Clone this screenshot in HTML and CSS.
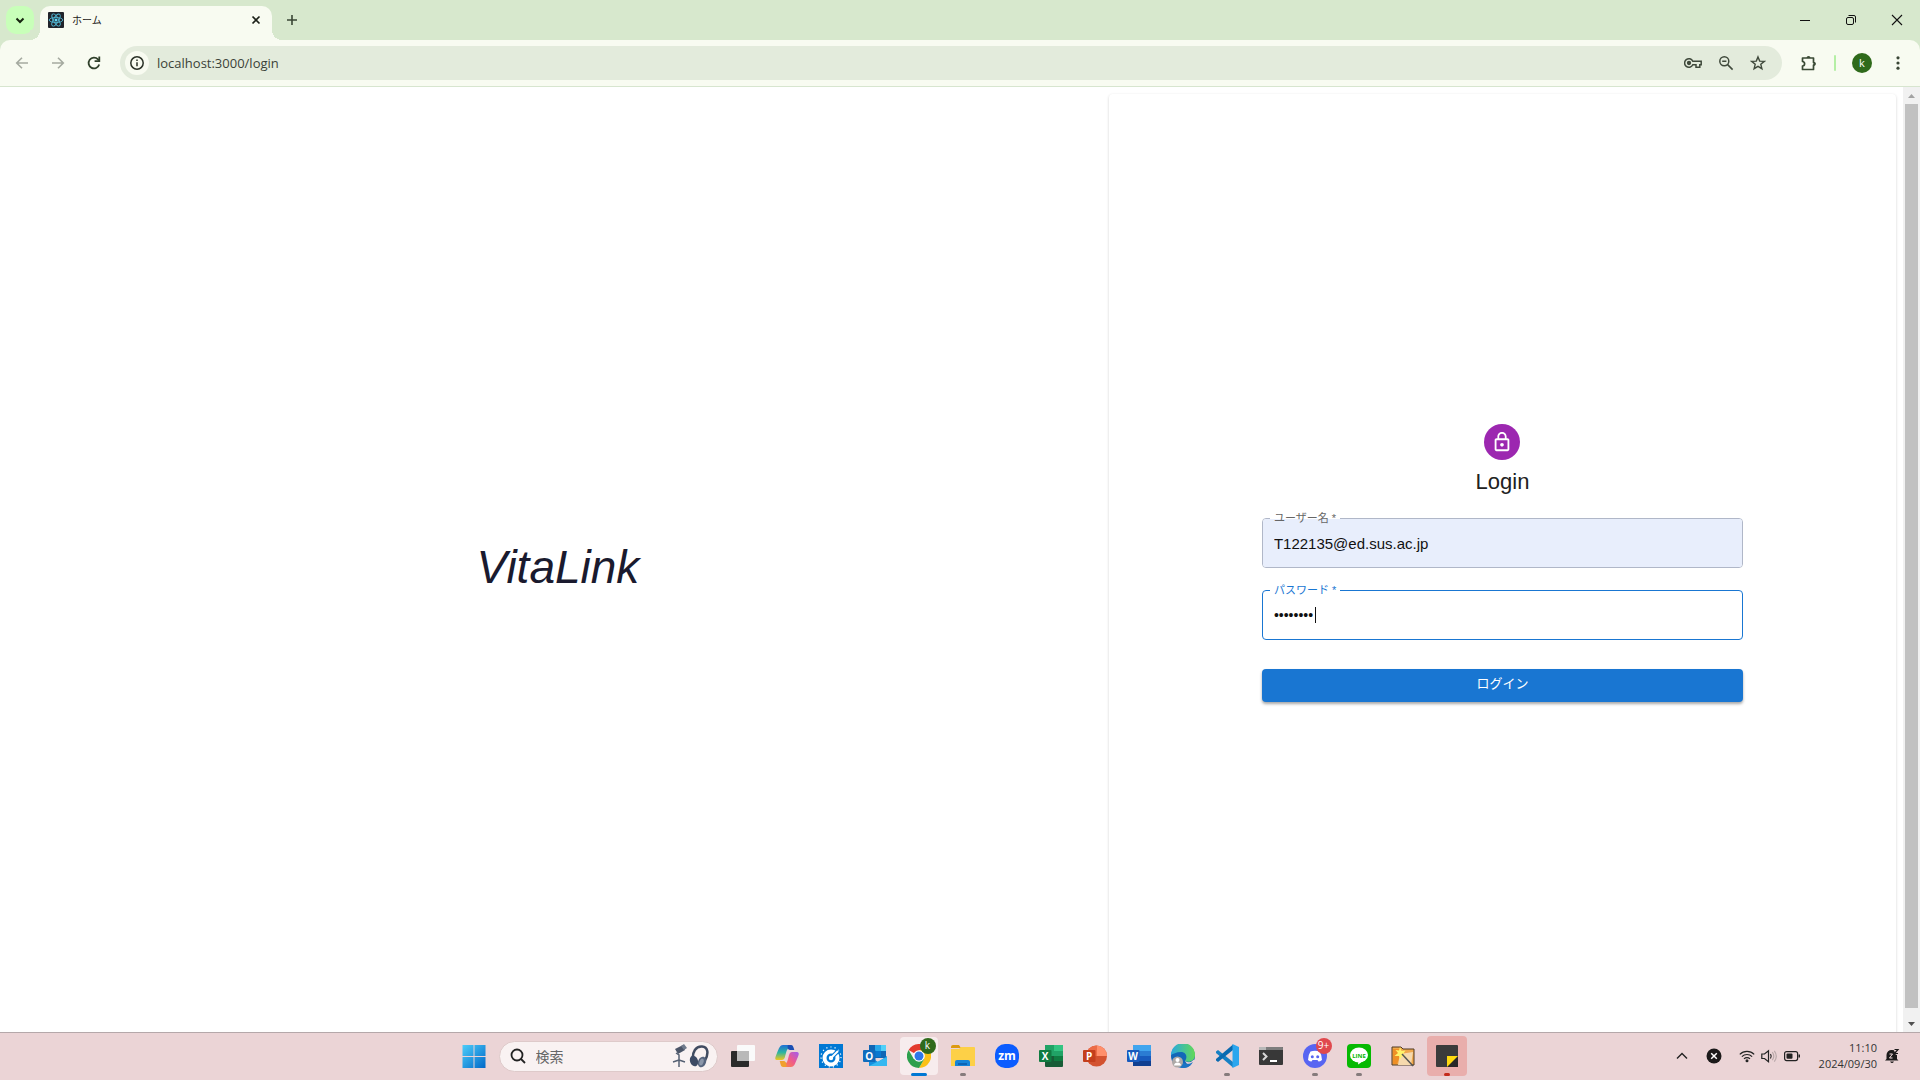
FILE: index.html
```html
<!DOCTYPE html>
<html lang="ja">
<head>
<meta charset="utf-8">
<meta name="viewport" content="width=device-width, initial-scale=1">
<title>ホーム</title>
<link rel="stylesheet" href="styles.css">
</head>
<body>
<div class="desktop">
  <header class="tab-strip">
    <button class="tab-search" type="button" aria-label="タブを検索"><svg width="12" height="12" viewBox="0 0 12 12"><path d="M2.5 4.5 6 8l3.5-3.5" fill="none" stroke="#16240f" stroke-width="2"/></svg></button>
    <div class="tab">
      <svg width="16" height="16" viewBox="0 0 16 16"><rect width="16" height="16" rx="1" fill="#20232a"/><g fill="none" stroke="#4fb4d0" stroke-width=".9"><ellipse cx="8" cy="8" rx="6.8" ry="2.6"/><ellipse cx="8" cy="8" rx="6.8" ry="2.6" transform="rotate(60 8 8)"/><ellipse cx="8" cy="8" rx="6.8" ry="2.6" transform="rotate(120 8 8)"/></g><circle cx="8" cy="8" r="1.5" fill="#61dafb"/></svg>
      <span class="tab-title">ホーム</span>
      <button class="plain" type="button" aria-label="閉じる"><svg width="16" height="16" viewBox="0 0 16 16"><path d="m4.5 4.5 7 7m0-7-7 7" stroke="#1c2119" stroke-width="1.7"/></svg></button>
    </div>
    <button class="plain new-tab" type="button" aria-label="新しいタブ"><svg width="16" height="16" viewBox="0 0 16 16"><path d="M8 3v10M3 8h10" stroke="#3a4635" stroke-width="1.6"/></svg></button>
    <div class="window-controls">
      <button class="plain" type="button" aria-label="最小化"><svg width="12" height="12" viewBox="0 0 12 12"><path d="M1 6.500h10" stroke="#111" stroke-width="1"/></svg></button>
      <button class="plain" type="button" aria-label="元に戻す"><svg width="12" height="12" viewBox="0 0 12 12" fill="none" stroke="#111"><rect x="1.500" y="3.500" width="7" height="7" rx="1.500"/><path d="M3.500 1.500H9a1.500 1.500 0 0 1 1.500 1.500v5.500"/></svg></button>
      <button class="plain" type="button" aria-label="ウィンドウを閉じる"><svg width="12" height="12" viewBox="0 0 12 12"><path d="m1 1 10 10M11 1 1 11" stroke="#111" stroke-width="1.100"/></svg></button>
    </div>
  </header>

  <nav class="toolbar">
    <div class="nav-buttons">
      <button class="plain" type="button" aria-label="戻る"><svg width="16" height="16" viewBox="0 0 16 16" fill="none" stroke="#a5aaa0" stroke-width="1.600"><path d="M14 8H3m5-5.300L2.700 8 8 13.300"/></svg></button>
      <button class="plain" type="button" aria-label="進む"><svg width="16" height="16" viewBox="0 0 16 16" fill="none" stroke="#a5aaa0" stroke-width="1.600"><path d="M2 8h11M8 2.700 13.300 8 8 13.300"/></svg></button>
      <button class="plain" type="button" aria-label="再読み込み"><svg width="16" height="16" viewBox="0 0 16 16" fill="none" stroke="#30402b" stroke-width="1.800"><path d="M13.200 9.500A5.400 5.400 0 1 1 12 4.400l1 1"/><path d="M13.300 1.500v4.700H8.600"/></svg></button>
    </div>
    <div class="omnibox">
      <button class="site-info" type="button" aria-label="サイト情報"><svg width="16" height="16" viewBox="0 0 16 16" fill="none" stroke="#2a3127" stroke-width="1.500"><circle cx="8" cy="8" r="6.200"/><path d="M8 7.200v4M8 4.500v1.600"/></svg></button>
      <input class="url" type="text" value="localhost:3000/login" aria-label="アドレスバー">
      <button class="plain" type="button" aria-label="パスワード管理"><svg width="18" height="16" viewBox="1 0 18 16" fill="none" stroke="#3f493b" stroke-width="1.500"><path d="M9.800 6.200a4.300 4.300 0 1 0 0 3.600H13v2.500h3.800V9.800h1.400V6.200z"/><circle cx="6" cy="8" r="1.400" fill="#3f493b"/></svg></button>
      <button class="plain" type="button" aria-label="ズーム"><svg width="16" height="16" viewBox="0 0 16 16" fill="none" stroke="#3f493b" stroke-width="1.500"><circle cx="6.300" cy="6.300" r="4.500"/><path d="m9.600 9.600 5 5M4.200 6.300h4.200"/></svg></button>
      <button class="plain" type="button" aria-label="ブックマーク"><svg width="16" height="16" viewBox="0 0 16 16" fill="none" stroke="#3f493b" stroke-width="1.400"><path d="m8 1.900 1.700 4.200 4.600.3-3.500 2.900 1.100 4.400L8 11.300l-3.900 2.400 1.100-4.400-3.500-2.900 4.600-.3z"/></svg></button>
    </div>
    <div class="toolbar-end">
      <button class="plain" type="button" aria-label="拡張機能"><svg width="18" height="18" viewBox="0 0 18 18"><path d="M2.500 4h11v4.500c2 0 2 2.500 0 2.500v4.500h-11V12c2.800-.3 2.800-4.200 0-4.500z" fill="none" stroke="#3a4a35" stroke-width="1.700" stroke-linejoin="round"/><path d="M6.500 4a2 2 0 0 1 4 0zm7 4a2 2 0 0 1 0 4z" fill="#3a4a35"/></svg></button>
      <span class="divider"></span>
      <button class="profile" type="button">k</button>
      <button class="plain" type="button" aria-label="メニュー"><svg width="16" height="16" viewBox="0 0 16 16" fill="#3a4635"><circle cx="8" cy="2.800" r="1.600"/><circle cx="8" cy="8" r="1.600"/><circle cx="8" cy="13.200" r="1.600"/></svg></button>
    </div>
  </nav>

  <div class="viewport">
    <main class="page">
      <section class="brand"><h1>VitaLink</h1></section>
      <section class="paper">
        <div class="lock"><svg width="22" height="22" viewBox="0 0 24 24" fill="#fff"><path d="M12 17c1.100 0 2-.9 2-2s-.9-2-2-2-2 .9-2 2 .9 2 2 2m6-9h-1V6c0-2.760-2.240-5-5-5S7 3.240 7 6v2H6c-1.100 0-2 .9-2 2v10c0 1.100.9 2 2 2h12c1.100 0 2-.9 2-2V10c0-1.100-.9-2-2-2M8.900 6c0-1.710 1.390-3.100 3.100-3.100s3.100 1.390 3.100 3.100v2H8.900zM18 20H6V10h12z"/></svg></div>
        <h2>Login</h2>
        <form class="login-form">
          <fieldset class="field filled">
            <legend><label for="user">ユーザー名 *</label></legend>
            <div class="input-wrap"><input id="user" type="text" value="T122135@ed.sus.ac.jp"></div>
          </fieldset>
          <fieldset class="field active">
            <legend><label for="password">パスワード *</label></legend>
            <div class="input-wrap"><input id="password" type="password" value="password"><span class="caret"></span></div>
          </fieldset>
          <button class="submit" type="submit">ログイン</button>
        </form>
      </section>
    </main>
    <div class="scrollbar">
      <svg width="17" height="17" viewBox="0 0 17 17"><path d="M5 11h7L8.500 7z" fill="#a3a3a3"/></svg>
      <span class="thumb"></span>
      <svg width="17" height="17" viewBox="0 0 17 17"><path d="M5 7h7l-3.500 4z" fill="#505050"/></svg>
    </div>
  </div>

  <footer class="taskbar">
    <div class="apps">
      <button class="app start" type="button" aria-label="スタート"><svg width="24" height="24" viewBox="0 0 24 24"><defs><linearGradient id="win" x2="1" y2="1" gradientUnits="userSpaceOnUse" x1="0" y1="0" gradientTransform="scale(24)"><stop stop-color="#4fd0fb"/><stop offset="1" stop-color="#0067c8"/></linearGradient></defs><path d="M.5 1h11v11H.500zM12.500 1h11v11h-11zM.500 13h11v11H.500zM12.500 13h11v11h-11z" fill="url(#win)"/></svg></button>
      <div class="search">
        <svg width="16" height="16" viewBox="0 0 16 16" fill="none" stroke="#222" stroke-width="1.800"><circle cx="7" cy="7" r="5.500"/><path d="m11 11 4 4"/></svg>
        <input type="text" placeholder="検索" aria-label="検索">
        <svg width="38" height="24" viewBox="0 0 38 24"><path d="m4 5 8-4 2 5-7 4z" fill="#4b5568"/><path d="m10 2 3-2 3 4-3 2z" fill="#707b8c"/><path d="m5 9 3 2v5m0 0-6 2m6-2 6 2m-6-3v8" fill="none" stroke="#566174" stroke-width="1.500"/><path d="M22 16C21 8 25 2 31 2.500c6 .5 7 7 3 14" fill="none" stroke="#414c61" stroke-width="2.500"/><ellipse cx="23" cy="17" rx="4" ry="5.500" fill="#3d4a64" transform="rotate(-20 23 17)"/><ellipse cx="31" cy="18" rx="4" ry="5.500" fill="#56647d" transform="rotate(20 31 18)"/><ellipse cx="30.500" cy="18" rx="2" ry="3.500" fill="#8b97aa" transform="rotate(20 30.500 18)"/></svg>
      </div>
      <button class="app" type="button" aria-label="タスクビュー"><svg width="24" height="24" viewBox="0 0 24 24"><rect y="7" width="18" height="16" rx="1" fill="#2a2a2a"/><rect x="6" y="1" width="18" height="16" rx="1" fill="#fafafa"/><path d="M6 7h12v10H6z" fill="#b9b9b9"/></svg></button>
      <button class="app" type="button" aria-label="Copilot"><svg width="24" height="24" viewBox="0 0 24 24"><defs><linearGradient id="cpa" x1="0" y1="0" x2="0" y2="1"><stop stop-color="#1f6fd6"/><stop offset=".5" stop-color="#2db5a0"/><stop offset="1" stop-color="#f2c71b"/></linearGradient><linearGradient id="cpb" x1="1" y1="0" x2="0" y2="1"><stop stop-color="#a15bf0"/><stop offset=".5" stop-color="#ef5a8c"/><stop offset="1" stop-color="#fb8d3c"/></linearGradient></defs><path d="M14 1H8C5 1 4 4 2 9c-2 5-3 7 1 7h4c3 0 3-4 4-7 1-4 2-5 5-5-.4-1.600-.800-3-2-3z" fill="url(#cpa)"/><path d="M13 1h3c2 0 2.500 2 3.300 5H15c-2 0-3-3-2-5z" fill="#1b4fb4"/><path d="M10 23h6c3 0 4-3 6-8s3-7-1-7h-4c-3 0-3 4-4 7-1 4-2 5-5 5 .4 1.600.8 3 2 3z" fill="url(#cpb)"/><path d="M11 23H8c-2 0-2.500-3-3.300-6H9c2 0 3 4 2 6z" fill="#f0a02c"/></svg></button>
      <button class="app" type="button" aria-label="設定ツール"><svg width="24" height="24" viewBox="0 0 24 24"><rect width="24" height="24" fill="#0078d4"/><circle cx="12" cy="13" r="10" fill="none" stroke="#fff" stroke-width="1.200" stroke-dasharray="1.200 3"/><circle cx="12" cy="14" r="6.500" fill="#0078d4" stroke="#fff" stroke-width="4"/><path d="m11.500 14.500 8-8" stroke="#0078d4" stroke-width="4"/><path d="m11.500 14.500 7.500-7.500" stroke="#fff" stroke-width="2"/><circle cx="12" cy="14" r="2.200" fill="#fff"/></svg></button>
      <button class="app" type="button" aria-label="Outlook"><svg width="24" height="24" viewBox="0 0 24 24"><path d="M6 1h17v13H6z" fill="#1066b5"/><path d="M12 1h6v6h-6z" fill="#28a8ea"/><path d="M18 1h5v6h-5z" fill="#50d0f8"/><path d="M12 7h6v6h-6z" fill="#0a78d0"/><path d="M6 12 15 18l9-6v10H6z" fill="#1490df"/><path d="m6 22 18-9v9z" fill="#35b8f1"/><rect y="6" width="12.500" height="12" rx="1" fill="#0f6cbd"/><text x="6.200" y="15.500" class="tile">O</text></svg></button>
      <button class="app current" type="button" aria-label="Chrome"><svg width="24" height="24" viewBox="0 0 24 24"><path d="M12 12 1.600 6A12 12 0 0 1 22.400 6z" fill="#e33b2e"/><path d="M12 12V6h10.400A12 12 0 0 1 12 24l5.200-9z" fill="#fbc116"/><path d="M12 12 17.200 15 12 24A12 12 0 0 1 1.600 6l5.200 9z" fill="#2da04d"/><circle cx="12" cy="12" r="5.800" fill="#fff"/><circle cx="12" cy="12" r="4.500" fill="#2f78e8"/></svg><span class="badge green">k</span><i class="run wide"></i></button>
      <button class="app" type="button" aria-label="エクスプローラー"><svg width="24" height="24" viewBox="0 0 24 24"><path d="M0 3q0-2 2-2h6l2 3H0z" fill="#dc9a10"/><path d="M0 5h8l2-2h13q1 0 1 1v18H0z" fill="#fdd047"/><path d="M4 22v-4q0-2 2-2h11q2 0 2 2v4z" fill="#1684d8"/><path d="M7 20h9" stroke="#0b5aa8" stroke-width="1.500"/></svg><i class="run"></i></button>
      <button class="app" type="button" aria-label="Zoom"><svg width="24" height="24" viewBox="0 0 24 24"><rect width="24" height="24" rx="10" fill="#0b5cff"/><text x="12" y="16" class="tile zoom">zm</text></svg></button>
      <button class="app" type="button" aria-label="Excel"><svg width="24" height="24" viewBox="0 0 24 24"><rect x="6" y="1" width="18" height="22" rx="1" fill="#185c37"/><path d="M6 1h9v11H6z" fill="#21a366"/><path d="M15 1h9v6h-9z" fill="#33c481"/><path d="M15 7h9v5h-9z" fill="#21a366"/><path d="M6 12h9v5H6z" fill="#185c37"/><path d="M15 12h9v5h-9z" fill="#107c41"/><rect y="6" width="12.500" height="12" rx="1" fill="#107c41"/><text x="6.200" y="15.500" class="tile">X</text></svg></button>
      <button class="app" type="button" aria-label="PowerPoint"><svg width="24" height="24" viewBox="0 0 24 24"><circle cx="13.500" cy="12" r="10.500" fill="#d35230"/><path d="M13.500 1.500A10.500 10.500 0 0 1 24 12H13.500z" fill="#ff8f6b"/><path d="M13.500 1.500A10.500 10.500 0 0 0 3 12h10.500z" fill="#ed6c47"/><rect y="6" width="12.500" height="12" rx="1" fill="#c43e1c"/><text x="6.200" y="15.500" class="tile">P</text></svg></button>
      <button class="app" type="button" aria-label="Word"><svg width="24" height="24" viewBox="0 0 24 24"><path d="M6 1h18v6H6z" fill="#41a5ee"/><path d="M6 7h18v5H6z" fill="#2b7cd3"/><path d="M6 12h18v5H6z" fill="#185abd"/><path d="M6 17h18v5H6z" fill="#103f91"/><rect y="6" width="12.500" height="12" rx="1" fill="#185abd"/><text x="6.200" y="15.500" class="tile">W</text></svg></button>
      <button class="app" type="button" aria-label="Edge"><svg width="24" height="24" viewBox="0 0 24 24"><defs><linearGradient id="edge" x1="0" y1="0" x2="1" y2="0"><stop stop-color="#2aa8e0"/><stop offset="1" stop-color="#62d957"/></linearGradient></defs><circle cx="12" cy="12" r="12" fill="#1267b8"/><path d="M0 11A12 12 0 0 1 24 11c0 6-6 8-10 6 3-4 1-9-4-9-5 0-8 2-10 3z" fill="url(#edge)"/><path d="M14 17q5 3 9-1.500l2 1.500-3 4-6-1z" fill="#ebd4d6"/><path d="M9 13c0 6 7 9 13 5-3 5-8 6-11 6-4-2-4-8-2-11z" fill="#1b74c4"/><circle cx="6.500" cy="18" r="5.500" fill="#ada9a7"/><circle cx="6.500" cy="16" r="2" fill="#fff"/><path d="M3 21.500c0-4 7-4 7 0z" fill="#fff"/></svg></button>
      <button class="app" type="button" aria-label="VS Code"><svg width="24" height="24" viewBox="0 0 24 24"><path d="m1 7.500 2-1.500 15 12v5.500L1 9z" fill="#1680c4"/><path d="M1 16.500 3 18 18 6V.5L1 15z" fill="#0a6ab0"/><path d="m17.500 0 6.500 3v18l-6.500 3z" fill="#2ba6ee"/></svg><i class="run"></i></button>
      <button class="app" type="button" aria-label="ターミナル"><svg width="24" height="24" viewBox="0 0 24 24"><rect y="3" width="24" height="18" rx="1" fill="#383838"/><path d="M0 6V4q0-1 1-1h22q1 0 1 1v2z" fill="#7d7d7d"/><path d="M0 3h7v3H0z" fill="#b8b8b8"/><path d="m4 9 3.500 3.500L4 16" fill="none" stroke="#d8d8d8" stroke-width="2"/><path d="M11 17h7" stroke="#fff" stroke-width="2"/></svg></button>
      <button class="app" type="button" aria-label="Discord"><svg width="24" height="24" viewBox="0 0 24 24"><circle cx="12" cy="12" r="12" fill="#5865f2"/><path d="M7.500 7.500Q12 6 16.500 7.500 19 11 19 16q-2 1.500-3.500 1.500l-1-1.500h-5l-1 1.500Q7 17.500 5 16q0-5 2.500-8.500z" fill="#fff"/><circle cx="9.300" cy="12.800" r="1.500" fill="#5865f2"/><circle cx="14.700" cy="12.800" r="1.500" fill="#5865f2"/></svg><span class="badge red">9+</span><i class="run"></i></button>
      <button class="app" type="button" aria-label="LINE"><svg width="24" height="24" viewBox="0 0 24 24"><rect width="24" height="24" rx="4" fill="#06b902"/><ellipse cx="12" cy="11" rx="9" ry="7.500" fill="#fff"/><path d="M16 16q-2 3-5 4.500L11.500 17z" fill="#fff"/><text x="12" y="13.500" class="line">LINE</text></svg><i class="run"></i></button>
      <button class="app" type="button" aria-label="画像フォルダー"><svg width="24" height="24" viewBox="0 0 24 24"><path d="M1 3h9l2 2h11v16H1z" fill="#f1a84b" stroke="#4f3a25"/><path d="M7 21 9 10l13-2-2 13z" fill="#f6d9ad"/><path d="M2 20V5h8v4L6 20z" fill="#ef8f25"/><path d="m9 3 1.500 4 4-.5-2.500 3.500 3 3-4.500-.5L9 16l-1-4-4.500 0L7 9 4.500 6l3.500.5z" fill="#fff36a"/><path d="m11 10 11 12" stroke="#555" stroke-width="1.500"/></svg></button>
      <button class="app alert" type="button" aria-label="付箋"><svg width="24" height="24" viewBox="0 0 24 24"><path d="M1 2q0-1 1-1h20q1 0 1 1v10L12 23H2q-1 0-1-1z" fill="#3b3b3b"/><path d="M12 12h11v11H12z" fill="#282828"/><path d="M12 12h11L12 23z" fill="#ffd90f"/></svg><i class="run warn"></i></button>
    </div>
    <div class="tray">
      <button class="plain" type="button" aria-label="隠れているインジケーター"><svg width="16" height="16" viewBox="0 0 16 16"><path d="m3 10.500 5-5 5 5" fill="none" stroke="#222" stroke-width="1.400"/></svg></button>
      <svg class="tray-x" width="16" height="16" viewBox="0 0 16 16"><circle cx="8" cy="8" r="7.500" fill="#1c1a1a"/><path d="m5.200 5.200 5.600 5.600m0-5.600-5.600 5.600" stroke="#fff" stroke-width="1.500"/></svg>
      <div class="status">
        <svg width="16" height="16" viewBox="0 0 16 16" fill="none" stroke="#222" stroke-width="1.200"><path d="M.8 6.300a10.200 10.200 0 0 1 14.400 0M2.900 8.600a7.200 7.200 0 0 1 10.200 0M5 10.900a4.200 4.200 0 0 1 6 0"/><circle cx="8" cy="12.800" r=".9" fill="#222"/></svg>
        <svg width="16" height="16" viewBox="0 0 16 16" fill="none" stroke="#222" stroke-width="1.200"><path d="M.8 6v4.500h2.700l4 3.200V2.800l-4 3.200z"/><path d="M9.500 6q1.500 2.200 0 4.500"/><path d="M11.300 4.200q3 4 0 8M13.300 2.800q4 5.400 0 10.800" stroke="#b9a9aa"/></svg>
        <svg width="18" height="16" viewBox="0 0 18 16"><rect x="1.600" y="3.600" width="13" height="9" rx="2" fill="none" stroke="#222" stroke-width="1.200"/><rect x="3.500" y="5.500" width="6" height="5.200" rx="1" fill="#222"/><path d="M15.500 6.500h1.500v3h-1.500z" fill="#222"/></svg>
      </div>
      <time class="clock" datetime="2024-09-30T11:10"><span>11:10</span><span>2024/09/30</span></time>
      <svg width="16" height="16" viewBox="0 0 16 16"><path d="M2.500 7A5 5 0 0 1 8 2q5 0 5 5v4l1.500 1.500H1L2.500 11zM6 13.500h4q-2 3-4 0z" fill="#1c1a1a"/><path d="M5.500 6h3l-3 4h3" fill="none" stroke="#f2dcde"/><path d="M9 0h7v6l-4 1z" fill="#ebd4d6"/><path d="M10.500 1.500H14l-3.500 4H14" fill="none" stroke="#1c1a1a" stroke-width="1.200"/></svg>
    </div>
  </footer>
</div>
</body>
</html>
```

FILE: styles.css
```css
* { box-sizing: border-box; }
body { margin: 0; font-family: "Liberation Sans", "Noto Sans CJK JP", sans-serif; }
button, input { font: inherit; color: inherit; }
svg { display: block; flex: none; }

.desktop { display: flex; flex-direction: column; height: 100vh; background: #d7e8cd; }
.plain { display: flex; align-items: center; justify-content: center; border: 0; padding: 0; background: none; }

/* Browser chrome */
.tab-strip { display: flex; align-items: center; height: 40px; padding-left: 6px; font-family: "Open Sans", "Noto Sans CJK JP", sans-serif; }
.tab-search { display: flex; align-items: center; justify-content: center; width: 28px; height: 28px; border: 0; border-radius: 10px; padding: 0; background: #c8ffb9; }
.tab { position: relative; display: flex; align-items: center; gap: 8px; align-self: flex-end; width: 232px; height: 34px; margin-left: 6px; padding: 0 8px 6px; border-radius: 10px 10px 0 0; background: #f8fbf1; }
.tab::before, .tab::after { content: ""; position: absolute; bottom: 0; width: 10px; height: 10px; }
.tab::before { right: 100%; background: radial-gradient(circle at 0 0, #d7e8cd 10px, #f8fbf1 10px); }
.tab::after { left: 100%; background: radial-gradient(circle at 100% 0, #d7e8cd 10px, #f8fbf1 10px); }
.tab-title { flex: 1; font-size: 10px; line-height: 16px; color: #1c2119; }
.new-tab { width: 40px; height: 28px; }
.window-controls { display: flex; align-self: stretch; margin-left: auto; }
.window-controls .plain { width: 46px; }

.toolbar { display: flex; align-items: center; height: 47px; border-bottom: 1px solid #d7e5cf; border-radius: 10px 10px 0 0; background: #f8fbf1; }
.nav-buttons { display: flex; gap: 4px; padding: 0 10px 0 6px; }
.nav-buttons .plain { width: 32px; height: 32px; }
.omnibox { display: flex; align-items: center; gap: 16px; flex: 1; height: 34px; padding: 0 16px 0 5px; border-radius: 17px; background: #e3ebdc; }
.site-info { display: flex; align-items: center; justify-content: center; width: 24px; height: 24px; border: 0; border-radius: 50%; padding: 0; background: #f8fbf1; }
.url { flex: 1; min-width: 0; height: 24px; margin-left: -8px; border: 0; padding: 0; background: none; font-family: "Open Sans", sans-serif; font-size: 13px; color: #3b4238; }
.toolbar-end { display: flex; align-items: center; padding: 0 14px 0 18px; }
.divider { width: 2px; height: 16px; margin: 0 16px; border-radius: 1px; background: #b5efa5; }
.profile { width: 20px; height: 20px; margin-right: 18px; border: 0; border-radius: 50%; padding: 0; background: #2f6a1b; color: #fff; font-family: "Open Sans", sans-serif; font-size: 11px; line-height: 18px; }

/* Login page */
.viewport { display: flex; flex: 1; min-height: 0; background: #fff; }
.page { display: grid; grid-template: 100% / 7fr 5fr; flex: 1; height: 100%; padding: 7px; overflow: hidden; }
.page > section { height: calc(100% + 14px); }
.brand { display: flex; align-items: center; justify-content: center; }
.brand h1 { margin: 0; font-size: 46px; font-style: italic; font-weight: 400; line-height: 52px; color: #1a1a2e; }
.paper { display: flex; flex-direction: column; align-items: center; justify-content: center; padding: 0 153px 7px; border-radius: 4px; background: #fff; box-shadow: 0 1px 3px rgba(0, 0, 0, .18); color: #212121; }
.lock { display: grid; place-items: center; width: 36px; height: 36px; border-radius: 50%; background: #9c27b0; }
.paper h2 { margin: 6px 0 12px; font-size: 22px; font-weight: 400; line-height: 32px; }
.login-form { display: flex; flex-direction: column; gap: 14px; width: 100%; }
.field { min-width: 0; margin: 0; padding: 0; border: 1px solid #b0b7c8; border-radius: 4px; }
.field legend { position: relative; z-index: 1; height: 16px; margin-left: 7px; padding: 0 4px; font-size: 11px; line-height: 16px; color: #666; }
.field label { display: block; }
.input-wrap { position: relative; margin-top: -7px; }
.field input { display: block; width: 100%; height: 48px; border: 0; border-radius: 3px; outline: 0; padding: 0 11px; background: transparent; font-size: 15px; color: #111; }
.filled input { background: #e8eefc; }
.field.active { border-color: #1976d2; }
.active legend { color: #1976d2; }
.field input[type="password"] { font-size: 14px; }
.caret { position: absolute; top: 16px; left: 52px; width: 1px; height: 16px; background: #111; }
.submit { height: 33px; margin-top: 15px; border: 0; border-radius: 4px; padding: 0 0 3px; background: #1976d2; box-shadow: 0 2px 3px rgba(0, 0, 0, .35); color: #fff; font-size: 13px; line-height: 30px; }

.scrollbar { display: flex; flex-direction: column; align-items: center; width: 17px; background: #f1f1f1; }
.thumb { flex: 1; width: 13px; margin-bottom: 7px; background: #c1c1c1; }

/* Taskbar */
.taskbar { display: grid; grid-template-columns: 1fr auto 1fr; height: 48px; padding-bottom: 1px; border-top: 1px solid #b5a8aa; background: #ebd4d6; font-family: "Open Sans", "Noto Sans CJK JP", sans-serif; }
.apps { grid-column: 2; display: flex; align-items: center; }
.app { position: relative; display: grid; place-items: center; width: 44px; height: 44px; border: 0; padding: 0; background: none; }
.current::before, .alert::before { content: ""; position: absolute; inset: 3px; border-radius: 4px; background: #f7eced; }
.alert::before { inset: 2px; background: #e9aeac; }
.app svg { position: relative; }
.search { display: flex; align-items: center; gap: 10px; width: 219px; height: 31px; margin: 0 3px; padding: 0 8px 0 10px; border: 1px solid #decaca; border-radius: 16px; background: #f9f2f2; }
.search input { flex: 1; min-width: 0; border: 0; padding: 0; background: none; font-size: 14px; }
.search input::placeholder { color: #666; opacity: 1; }
.run { position: absolute; bottom: 2px; width: 6px; height: 3px; border-radius: 2px; background: #857b7c; }
.run.wide { width: 16px; background: #0078d4; }
.run.warn { background: #c42b1c; }
.badge { position: absolute; top: 4px; right: 5px; width: 16px; height: 16px; border-radius: 50%; color: #fff; font-size: 10px; line-height: 15px; text-align: center; }
.badge.green { background: #2f6a1b; }
.badge.red { background: #e0484d; }
.tile { fill: #fff; font: 700 10px "Open Sans", sans-serif; text-anchor: middle; }
.tile.zoom { font-size: 12px; }
.line { fill: #06b902; font: 700 6px "Open Sans", sans-serif; text-anchor: middle; }
.tray { grid-column: 3; display: flex; align-items: center; justify-content: flex-end; padding-right: 20px; color: #333; }
.tray-x { margin: 0 24px 0 16px; }
.status { display: flex; gap: 6px; }
.clock { display: flex; flex-direction: column; width: 76px; margin-right: 7px; font-size: 11px; line-height: 16px; text-align: right; }
.tray-x { margin-right: 17px; }
```
